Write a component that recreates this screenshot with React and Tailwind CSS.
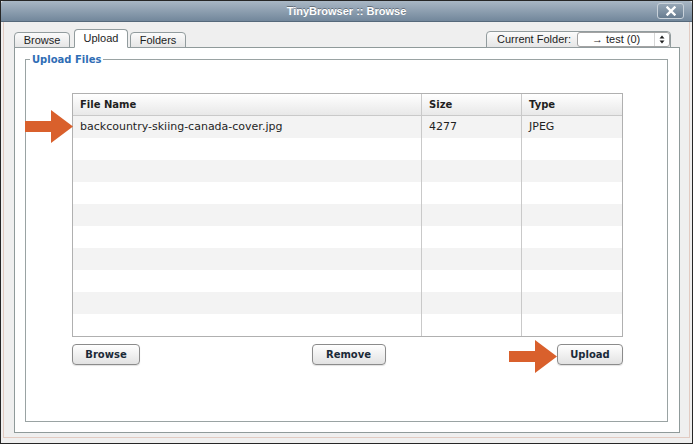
import React from "react";

const rows = Array.from({ length: 10 });

function Arrow({ className }) {
  return (
    <svg className={className} width="48" height="33" viewBox="0 0 48 33">
      <polygon points="0,11 26,11 26,0 48,16.5 26,33 26,22 0,22" fill="#d9602c" />
    </svg>
  );
}

function Tab({ children, active, className = "" }) {
  return (
    <div
      className={
        "flex items-center justify-center rounded-t-[4px] border border-[#929c9e] text-[11px] text-[#1d1d1d] " +
        (active
          ? "h-[19px] w-[54px] bg-white border-b-white "
          : "h-[16px] w-[56px] bg-linear-to-b from-[#fbfbfb] to-[#e6e6e6] ") +
        className
      }
    >
      {children}
    </div>
  );
}

function Button({ children, className = "" }) {
  return (
    <button
      className={
        "h-[21px] rounded-[4px] border border-[#8b8b8b] bg-linear-to-b from-white to-[#e2e2e2] text-[10px] font-bold text-[#1b2a38] shadow-[0_1px_1px_rgba(0,0,0,0.12)] " +
        className
      }
    >
      {children}
    </button>
  );
}

export default function App() {
  return (
    <div className="relative w-[693px] h-[444px] flex flex-col overflow-hidden border border-[#262626] bg-[#efefef] font-['DejaVu_Sans',Verdana,sans-serif]">
      {/* title bar */}
      <div className="h-[21px] shrink-0 flex items-center bg-linear-to-b from-[#a9b7c5] to-[#72879b] border-b border-[#56697b] rounded-t-[3px]">
        <div className="w-[35px]" />
        <div className="flex-1 text-center font-['Liberation_Sans',Arial,sans-serif] text-[11px] font-bold text-white [text-shadow:0_-1px_0_rgba(0,0,0,0.35)]">
          TinyBrowser :: Browse
        </div>
        <div className="mr-[8px] w-[27px] h-[16px] flex items-center justify-center rounded-[3px] border border-[#c9d2da] bg-linear-to-b from-[#97a7b6] to-[#687d91]">
          <svg width="10" height="10" viewBox="0 0 10 10">
            <path d="M1.5 1.5 L8.5 8.5 M8.5 1.5 L1.5 8.5" stroke="white" strokeWidth="2.4" strokeLinecap="square" />
          </svg>
        </div>
      </div>

      {/* body */}
      <div className="flex-1 flex flex-col mx-[2px] mb-[5px] border-x border-b border-[#e2cbc2] pl-[10px] pr-[9px] pt-[8px] pb-[4px]">
        <div className="h-[18px] -mb-px relative z-10 flex items-end justify-between font-['Liberation_Sans',Arial,sans-serif]">
          <div className="flex items-end">
            <Tab>Browse</Tab>
            <Tab active className="ml-[4px]">
              Upload
            </Tab>
            <Tab className="ml-[2px]">Folders</Tab>
          </div>
          <div className="mr-[9px] h-[17px] w-[185px] flex items-end rounded-t-[4px] border border-[#929c9e] bg-linear-to-b from-[#fbfbfb] to-[#e6e6e6] pl-[10px]">
            <span className="self-center text-[11px] text-[#1d1d1d] w-[74px] whitespace-nowrap">Current Folder:</span>
            <div className="ml-[6px] h-[15px] w-[93px] flex items-center rounded-[3px] border border-[#a3a3a3] bg-white text-[11px] text-[#1d1d1d]">
              <span className="pl-[14px] whitespace-nowrap">→ test (0)</span>
              <div className="ml-auto h-full w-[15px] flex items-center justify-center border-l border-[#d6d6d6]">
                <svg width="6" height="9" viewBox="0 0 6 9">
                  <polygon points="3,0.5 5.5,3.5 0.5,3.5" fill="#222" />
                  <polygon points="0.5,5.5 5.5,5.5 3,8.5" fill="#222" />
                </svg>
              </div>
            </div>
          </div>
        </div>

        {/* panel */}
        <div className="flex-1 flex flex-col bg-white border border-[#8f9a9a]">
          <fieldset className="flex-1 mt-[5px] mb-[10px] ml-[10px] mr-[11px] border border-[#9aa3a3]">
            <legend className="ml-[4px] px-[2px] text-[10px] leading-[13px] font-bold text-[#2f6db5]">Upload Files</legend>

            <div className="pl-[46px] pt-[27px]">
              <div className="w-[551px] border border-[#b0b0b0] text-[#1f1f1f]">
                <div className="flex h-[22px] bg-linear-to-b from-white to-[#e8e8e8] border-b border-[#c9c9c9] text-[10px] font-bold">
                  <div className="w-[348px] pl-[7px] flex items-center">File Name</div>
                  <div className="w-[100px] pl-[7px] flex items-center border-l border-[#c9c9c9]">Size</div>
                  <div className="flex-1 pl-[7px] flex items-center border-l border-[#c9c9c9]">Type</div>
                </div>
                {rows.map((_, i) => (
                  <div key={i} className={"flex h-[22px] text-[11px] " + (i % 2 === 0 ? "bg-[#f3f3f3]" : "bg-white")}>
                    <div className="w-[348px] pl-[7px] flex items-center whitespace-nowrap">
                      {i === 0 ? "backcountry-skiing-canada-cover.jpg" : ""}
                    </div>
                    <div className="w-[100px] pl-[7px] flex items-center border-l border-[#c9c9c9]">{i === 0 ? "4277" : ""}</div>
                    <div className="flex-1 pl-[7px] flex items-center border-l border-[#c9c9c9]">{i === 0 ? "JPEG" : ""}</div>
                  </div>
                ))}
              </div>

              <div className="w-[551px] mt-[7px] flex justify-between">
                <Button className="w-[68px]">Browse</Button>
                <Button className="w-[74px]">Remove</Button>
                <Button className="w-[66px]">Upload</Button>
              </div>
            </div>
          </fieldset>
        </div>
      </div>

      <Arrow className="absolute left-[24px] top-[109px]" />
      <Arrow className="absolute left-[508px] top-[339px]" />
    </div>
  );
}
